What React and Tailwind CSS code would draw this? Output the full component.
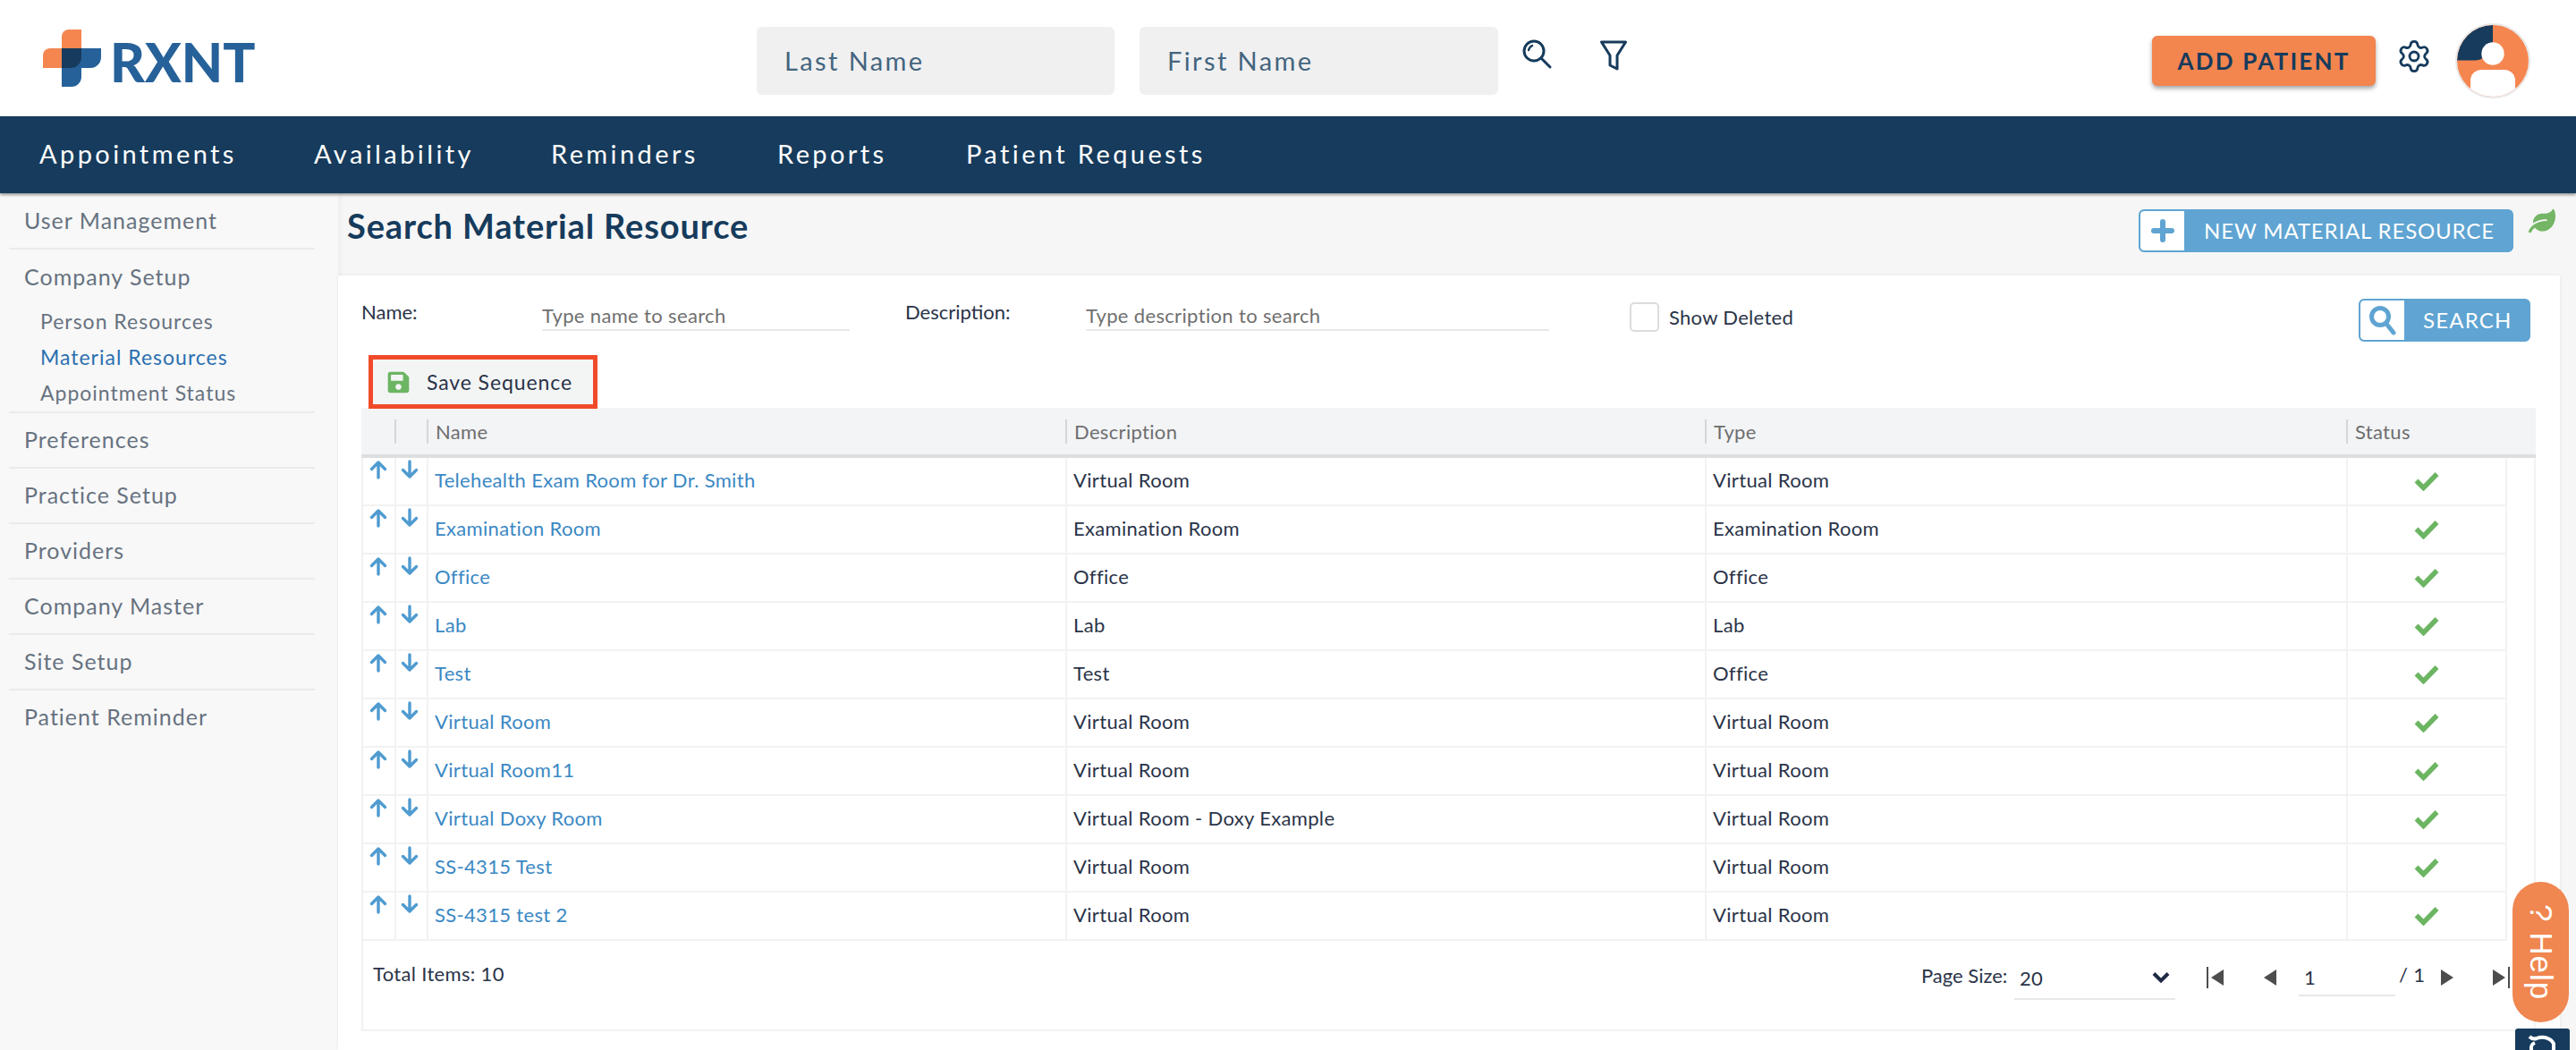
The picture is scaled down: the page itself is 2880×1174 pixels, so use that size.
import { Settings } from "lucide-react";
import { FaLeaf, FaSave } from "react-icons/fa";

const navItems = [
  ["Appointments", "w-[307px]"],
  ["Availability", "w-[265px]"],
  ["Reminders", "w-[253px]"],
  ["Reports", "w-[211px]"],
  ["Patient Requests", "w-[290px]"],
];

const sideGroups = [
  { label: "User Management" },
  {
    label: "Company Setup",
    children: ["Person Resources", "Material Resources", "Appointment Status"],
  },
  { label: "Preferences" },
  { label: "Practice Setup" },
  { label: "Providers" },
  { label: "Company Master" },
  { label: "Site Setup" },
  { label: "Patient Reminder" },
];

const rows = [
  ["Telehealth Exam Room for Dr. Smith", "Virtual Room", "Virtual Room"],
  ["Examination Room", "Examination Room", "Examination Room"],
  ["Office", "Office", "Office"],
  ["Lab", "Lab", "Lab"],
  ["Test", "Test", "Office"],
  ["Virtual Room", "Virtual Room", "Virtual Room"],
  ["Virtual Room11", "Virtual Room", "Virtual Room"],
  ["Virtual Doxy Room", "Virtual Room - Doxy Example", "Virtual Room"],
  ["SS-4315 Test", "Virtual Room", "Virtual Room"],
  ["SS-4315 test 2", "Virtual Room", "Virtual Room"],
];

const headCols = "grid grid-cols-[37px_36px_714px_715px_717px_180px_32px]";
// rows carry a 2px border on both sides, so first and last column give it back
const rowCols = "grid grid-cols-[35px_36px_714px_715px_717px_180px_30px]";

const Logo = () => (
  <div className="flex items-center gap-[10px]">
    <svg width="65" height="64" viewBox="0 0 65 64">
      <path d="M21 21V8a8 8 0 0 1 8-8h14v22H21z" fill="#f58650" />
      <path d="M21 21H8a8 8 0 0 0-8 8v14h22V21z" fill="#f58650" />
      <path d="M21 21h44v10a12 12 0 0 1-12 12H43v10a11 11 0 0 1-11 11H21z" fill="#266199" />
      <path d="M21 21h22v10a12 12 0 0 1-12 12H21z" fill="#163b5c" />
    </svg>
    <span className="font-['Lato'] font-black text-[60px] leading-none tracking-[0px] text-[#266199] mt-[8px]">
      RXNT
    </span>
  </div>
);

const TopSearchIcon = () => (
  <svg width="34" height="34" viewBox="0 0 34 34" fill="none" stroke="#163b5c" strokeWidth="3" strokeLinecap="round">
    <circle cx="13" cy="13" r="11" />
    <path d="M21 21l10 10" />
    <path d="M7 12c.5-2.5 2-4 4-5" strokeWidth="2.4" />
  </svg>
);

const FilterIcon = () => (
  <svg width="30" height="34" viewBox="0 0 30 34" fill="none" stroke="#163b5c" strokeWidth="3" strokeLinejoin="round">
    <path d="M1.5 2h27L19 17v15l-8-4V17z" />
  </svg>
);

const Avatar = () => (
  <svg width="84" height="84" viewBox="0 0 84 84">
    <defs>
      <clipPath id="avatar-clip">
        <circle cx="42" cy="42" r="40" />
      </clipPath>
    </defs>
    <circle cx="42" cy="42" r="41" fill="#fff" stroke="#e8e8e8" strokeWidth="2" />
    <g clipPath="url(#avatar-clip)">
      <rect width="84" height="84" fill="#f58650" />
      <path d="M42 2A40 40 0 0 0 2 41.5H22C30 41.5 33 38 33 30L42 22Z" fill="#163b5c" />
      <circle cx="42" cy="34" r="12.7" fill="#fff" />
      <path d="M17 84V64a12 12 0 0 1 12-12h26a12 12 0 0 1 12 12v20z" fill="#fff" />
    </g>
  </svg>
);

const IconButton = ({ icon, label, textClass }) => (
  <button className="flex h-[48px] rounded-[6px] border-[2px] border-[#5fa4d2] bg-[#5fa4d2] overflow-hidden font-['Lato'] text-white">
    <span className="flex h-full w-[49px] items-center justify-center rounded-l-[4px] bg-white">{icon}</span>
    <span className={textClass}>{label}</span>
  </button>
);

const ArrowIcon = ({ down }) => (
  <svg width="20" height="22" viewBox="0 0 20 22" fill="none" stroke="#4f9bd0" strokeWidth="3.4" strokeLinecap="round" strokeLinejoin="round" className={down ? "rotate-180" : ""}>
    <path d="M10 20V3M2.5 10.5L10 3l7.5 7.5" />
  </svg>
);

const Check = () => (
  <svg width="28" height="22" viewBox="0 0 28 22" fill="none" stroke="#6cb562" strokeWidth="5.5">
    <path d="M2.5 10.5l8 8L25.5 3" />
  </svg>
);

const PagerIcon = ({ dir, bar }) => (
  <svg width="20" height="26" viewBox="0 0 20 26" fill="#4d4d4d" className={dir === "right" ? "rotate-180" : ""}>
    {bar && <rect x="0" y="1" width="2" height="24" />}
    <path d="M19 4v18L5 13z" />
  </svg>
);

const App = () => {
  return (
    <div className="h-[1174px] w-[2880px] overflow-hidden relative flex flex-col bg-[#f6f6f6] font-['Lato',sans-serif] text-[#2a3348]">
      {/* top bar */}
      <header className="flex h-[130px] shrink-0 items-center bg-white">
        <div className="ml-[48px] w-[798px]">
          <Logo />
        </div>
        <input
          placeholder="Last Name"
          className="mt-[6px] h-[76px] w-[400px] rounded-[6px] bg-[#f0f0f0] pb-[2px] pl-[31px] text-[29px] tracking-[2.4px] placeholder:text-[#44657f]"
        />
        <input
          placeholder="First Name"
          className="mt-[6px] ml-[28px] h-[76px] w-[401px] rounded-[6px] bg-[#f0f0f0] pb-[2px] pl-[31px] text-[29px] tracking-[2.4px] placeholder:text-[#44657f]"
        />
        <span className="ml-[27px] -mt-[8px]">
          <TopSearchIcon />
        </span>
        <span className="ml-[53px] -mt-[6px]">
          <FilterIcon />
        </span>
        <button className="ml-[587px] mt-[6px] h-[56px] w-[250px] rounded-[6px] bg-[#f3854f] text-[26px] font-bold tracking-[2.2px] text-[#163b5c] shadow-[0_3px_5px_rgba(0,0,0,0.35)]">
          ADD PATIENT
        </button>
        <span className="ml-[23px] -mt-[4px]">
          <Settings size={40} strokeWidth={1.7} color="#163b5c" />
        </span>
        <span className="ml-[26px] mt-[6px]">
          <Avatar />
        </span>
      </header>

      {/* main nav */}
      <nav className="relative z-10 flex h-[86px] shrink-0 items-center bg-[#163b5c] pb-[2px] pl-[44px] text-[29px] tracking-[3.4px] text-white shadow-[0_2px_3px_rgba(0,0,0,0.4)]">
        {navItems.map(([label, width]) => (
          <span key={label} className={width}>
            {label}
          </span>
        ))}
      </nav>

      <div className="flex min-h-0 flex-1">
        {/* sidebar */}
        <aside className="w-[378px] shrink-0 bg-[#f8f8f8] pl-[10px] pr-[26px] pt-[1px] shadow-[2px_0_6px_rgba(0,0,0,0.04)] text-[25px] tracking-[1px] text-[#677280]">
          {sideGroups.map((group) => (
            <div key={group.label} className="border-b-[2px] border-[#ebebeb] last:border-b-0">
              <div className={group.children ? "flex h-[61px] items-center pl-[17px]" : "flex h-[60px] items-center pl-[17px]"}>{group.label}</div>
              {group.children && (
                <div className="-mt-[1px] pb-[1px] pl-[35px] text-[23px]">
                  {group.children.map((child) => (
                    <div key={child} className={child === "Material Resources" ? "flex h-[40px] items-center text-[#2a6fb0]" : "flex h-[40px] items-center"}>
                      {child}
                    </div>
                  ))}
                </div>
              )}
            </div>
          ))}
        </aside>

        <main className="w-[2484px] shrink-0">
          <div className="flex h-[92px] items-start pl-[10px]">
            <h1 className="mt-[16px] w-[2003px] text-[38px] font-bold leading-[40px] tracking-[0.85px] text-[#163b5c]">
              Search Material Resource
            </h1>
            <div className="mt-[18px]">
              <IconButton
                label="NEW MATERIAL RESOURCE"
                textClass="pl-[22px] pr-[19px] text-[24px] leading-[44px] tracking-[0.85px] whitespace-nowrap"
                icon={
                  <svg width="26" height="26" viewBox="0 0 26 26" stroke="#5fa4d2" strokeWidth="6" strokeLinecap="round">
                    <path d="M13 3v20M3 13h20" />
                  </svg>
                }
              />
            </div>
            <FaLeaf size={30} color="#74b566" className="ml-[17px] mt-[16px]" />
          </div>

          <section className="h-[866px] bg-white shadow-[0_0_4px_rgba(0,0,0,0.08)]">
            {/* filters */}
            <div className="flex h-[89px] items-start pl-[26px] text-[22px]">
              <span className="mt-[28px] w-[202px] leading-[26px]">Name:</span>
              <input
                placeholder="Type name to search"
                className="mt-[30px] h-[32px] w-[344px] border-b-[2px] border-[#e8e8e8] pb-[2px] text-[22px] tracking-[0.35px] placeholder:text-[#6f6f6f]"
              />
              <span className="ml-[62px] mt-[28px] w-[202px] leading-[26px]">Description:</span>
              <input
                placeholder="Type description to search"
                className="mt-[30px] h-[32px] w-[518px] border-b-[2px] border-[#e8e8e8] pb-[2px] text-[22px] tracking-[0.35px] placeholder:text-[#6f6f6f]"
              />
              <span className="ml-[90px] mt-[30px] h-[33px] w-[33px] rounded-[5px] border-[2px] border-[#dcdcdc] bg-white" />
              <span className="ml-[11px] mt-[34px] w-[771px] leading-[26px] tracking-[0.3px]">Show Deleted</span>
              <div className="mt-[26px]">
                <IconButton
                  label="SEARCH"
                  textClass="pl-[21px] pr-[18px] text-[24px] leading-[44px] tracking-[1.2px]"
                  icon={
                    <svg width="30" height="34" viewBox="0 0 30 34" fill="none" stroke="#5fa4d2" strokeWidth="5" strokeLinecap="round">
                      <circle cx="12" cy="13" r="9.5" />
                      <path d="M19 21l8 10" />
                    </svg>
                  }
                />
              </div>
            </div>

            {/* toolbar */}
            <div className="relative z-10 ml-[34px] flex h-[60px] w-[256px] items-center border-[5px] border-[#f04a2a] bg-[#f3f5f5] pl-[15px] text-[23px] tracking-[0.9px]">
              <FaSave size={27} color="#6cb562" />
              <span className="ml-[18px]">Save Sequence</span>
            </div>

            {/* table */}
            <div className="ml-[26px] mr-[27px] -mt-[1px] text-[22px] tracking-[0.33px]">
              <div className={`${headCols} h-[56px] items-center border-b-[4px] border-[#dedede] bg-[#f3f4f6] text-[#6e6e6e]`}>
                {["", "", "Name", "Description", "Type", "Status", ""].map((head, i) => (
                  <div key={i} className={i < 6 && i !== 0 ? "h-[27px] border-l-[2px] border-[#d6d6d6] pl-[8px] leading-[27px]" : "h-[27px]"}>
                    {head}
                  </div>
                ))}
              </div>
              {rows.map(([name, desc, type]) => (
                <div key={name} className={`${rowCols} h-[54px] border-x-[2px] border-[#f2f2f2]`}>
                  <div className="border-b-[2px] border-[#f2f2f2] pl-[7px] pt-[2px]">
                    <ArrowIcon />
                  </div>
                  <div className="border-b-[2px] border-l-[2px] border-[#f2f2f2] pl-[5px] pt-[2px]">
                    <ArrowIcon down />
                  </div>
                  <div className="flex items-center border-b-[2px] border-l-[2px] border-[#f2f2f2] pb-[4px] pl-[7px] text-[#3a88c4]">{name}</div>
                  <div className="flex items-center border-b-[2px] border-l-[2px] border-[#f2f2f2] pb-[4px] pl-[7px]">{desc}</div>
                  <div className="flex items-center border-b-[2px] border-l-[2px] border-[#f2f2f2] pb-[4px] pl-[7px]">{type}</div>
                  <div className="flex items-center justify-center border-x-[2px] border-b-[2px] border-[#f2f2f2]">
                    <Check />
                  </div>
                  <div />
                </div>
              ))}

              {/* pager */}
              <div className="flex h-[101px] items-start border-x-[2px] border-b-[2px] border-[#f2f2f2] pl-[11px]">
                <span className="mt-[24px] w-[1731px] leading-[26px]">Total Items: 10</span>
                <span className="mt-[26px] w-[104px] leading-[26px] tracking-normal">Page Size:</span>
                <div className="mt-[18px] flex h-[48px] w-[180px] items-center justify-between border-b-[2px] border-[#e8e8e8] pl-[6px] pr-[6px]">
                  <span>20</span>
                  <svg width="20" height="14" viewBox="0 0 20 14" fill="none" stroke="#1f2a44" strokeWidth="4">
                    <path d="M2 2.5l8 8 8-8" />
                  </svg>
                </div>
                <span className="ml-[35px] mt-[28px]">
                  <PagerIcon bar />
                </span>
                <span className="ml-[39px] mt-[28px]">
                  <PagerIcon />
                </span>
                <div className="ml-[24px] mt-[18px] h-[44px] w-[108px] border-b-[2px] border-[#e8e8e8] pl-[6px] pt-[10px] leading-[26px]">1</div>
                <span className="ml-[4px] mt-[25px] w-[46px] leading-[26px]">/ 1</span>
                <span className="mt-[28px]">
                  <PagerIcon dir="right" />
                </span>
                <span className="ml-[38px] mt-[28px]">
                  <PagerIcon dir="right" bar />
                </span>
              </div>
            </div>
          </section>
        </main>
      </div>

      {/* help tab */}
      <div className="absolute left-[2809px] top-[986px] flex h-[157px] w-[63px] items-center justify-center rounded-[32px] bg-[#f08650] font-['Liberation_Sans',sans-serif] text-[35px] tracking-[1px] text-white [writing-mode:vertical-rl]">
        ? Help
      </div>
      <div className="absolute left-[2812px] top-[1150px] h-[24px] w-[61px] overflow-hidden rounded-t-[3px] bg-[#163b5c]">
        <svg width="61" height="24" viewBox="0 0 61 24" fill="none" stroke="#fff" strokeWidth="4">
          <path d="M16 9c3 3 5 3 8 2 8-3 16 0 19 6v8M18 24c0-3-1-6 4-8" />
        </svg>
      </div>
    </div>
  );
};

export default App;
